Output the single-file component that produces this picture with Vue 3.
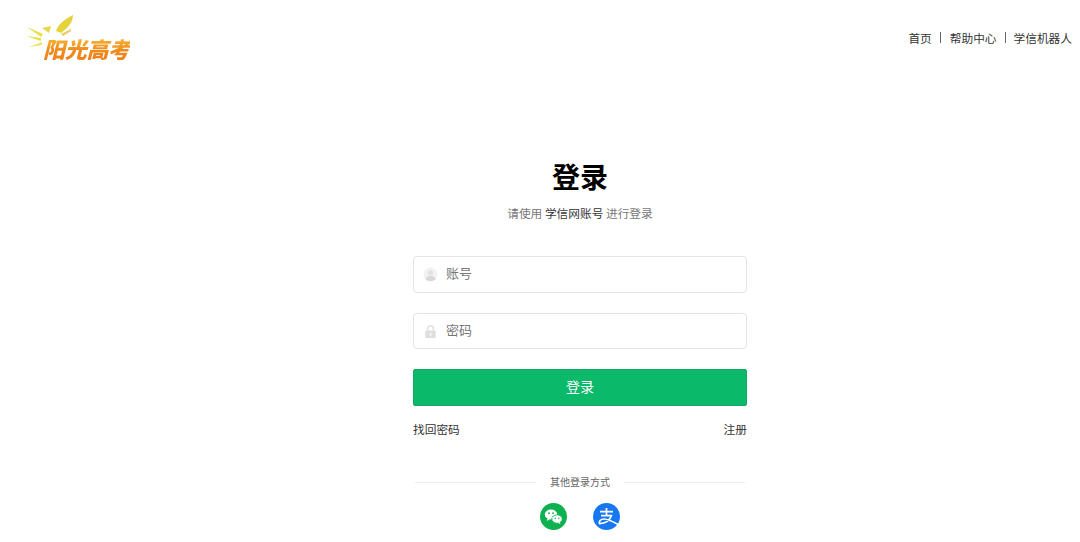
<template>
  <div class="page">
    <header class="top-bar">
      <div class="logo">
        <svg class="logo-rays" width="48" height="40" viewBox="0 0 48 40">
          <path d="M1 12 L17 19 L15 22 Z" fill="#e8e04a" />
          <path d="M0 21 L15 23 L15 26 Z" fill="#e8e04a" />
          <path d="M3 32 L16 27 L16 30 Z" fill="#ebe460" />
          <path d="M16 13 L25 11 L23 18 Z" fill="#e5d84a" />
          <path d="M30 16 C32 9 39 4 47 0 C47 7 42 13 35 18 Z" fill="#e6d33a" />
          <path d="M35 19 L45 14 L45 16 L37 21 Z" fill="#f0c868" />
        </svg>
        <span class="logo-text">阳光高考</span>
      </div>
      <nav class="top-nav">
        <a>首页</a>
        <i class="sep"></i>
        <a>帮助中心</a>
        <i class="sep sep-last"></i>
        <a>学信机器人</a>
      </nav>
    </header>

    <main class="login">
      <h1 class="title">登录</h1>
      <p class="sub">请使用 <b>学信网账号</b> 进行登录</p>

      <div class="field first">
        <svg class="field-icon" width="15" height="15" viewBox="0 0 16 16">
          <circle cx="8" cy="8" r="7.5" fill="#f3f3f3" />
          <circle cx="8" cy="6.2" r="2.8" fill="#e2e2e2" />
          <path d="M2.6 13 C3.6 10 6 9.6 8 9.6 C10 9.6 12.4 10 13.4 13 C11 15.6 5 15.6 2.6 13 Z" fill="#d8d8d8" />
        </svg>
        <span class="placeholder">账号</span>
      </div>
      <div class="field second">
        <svg class="field-icon" width="15" height="15" viewBox="0 0 16 16">
          <path d="M5 7 V5 a3 3 0 0 1 6 0 V7" fill="none" stroke="#e4e4e4" stroke-width="1.8" />
          <rect x="2.5" y="7" width="11" height="8" rx="1" fill="#dedede" />
          <rect x="7" y="9.5" width="2" height="3" fill="#f6f6f6" />
        </svg>
        <span class="placeholder">密码</span>
      </div>

      <button class="btn-login">登录</button>

      <div class="links">
        <a>找回密码</a>
        <a>注册</a>
      </div>

      <div class="divider">
        <span class="line"></span>
        <span class="divider-text">其他登录方式</span>
        <span class="line"></span>
      </div>

      <div class="socials">
        <svg width="27" height="27" viewBox="0 0 27 27">
          <circle cx="13.5" cy="13.5" r="13.5" fill="#0db14f" />
          <ellipse cx="11" cy="11.5" rx="6.2" ry="5" fill="#fff" />
          <path d="M7.5 15 L7 18 L10 16 Z" fill="#fff" />
          <ellipse cx="17" cy="16" rx="5.2" ry="4.2" fill="#fff" stroke="#0db14f" stroke-width="0.8" />
          <path d="M19.5 19 L20.5 21 L17.8 20 Z" fill="#fff" />
          <circle cx="9" cy="10.2" r="0.9" fill="#0db14f" />
          <circle cx="13" cy="10.2" r="0.9" fill="#0db14f" />
          <circle cx="15.3" cy="15.3" r="0.7" fill="#0db14f" />
          <circle cx="18.8" cy="15.3" r="0.7" fill="#0db14f" />
        </svg>
        <svg width="27" height="27" viewBox="0 0 27 27">
          <circle cx="13.5" cy="13.5" r="13.5" fill="#1677f0" />
          <path d="M7 8.6 H20 M13.5 5 V12 M8 12.6 H18.4 C17 17 13 20.5 6.5 20.6 C5.6 18.6 7.5 16 11 16 C15 16 20 18.6 26 22" fill="none" stroke="#fff" stroke-width="1.7" />
        </svg>
      </div>
    </main>
  </div>
</template>

<script setup>
</script>

<style>
html, body {
  margin: 0;
  background: #fff;
}
</style>

<style scoped>
.page {
  height: 542px;
  overflow: hidden;
  background: #fff;
  font-family: "Noto Sans CJK SC", "Liberation Sans", sans-serif;
  color: #333;
}

.top-bar {
  height: 76px;
  display: flex;
  justify-content: space-between;
  align-items: center;
  padding: 0 8px 0 26px;
}

.logo {
  position: relative;
  width: 106px;
  height: 46px;
  margin-top: -1px;
  filter: blur(0.4px);
}
.logo-rays {
  position: absolute;
  left: 0;
  top: 0;
}
.logo-text {
  position: absolute;
  left: 17px;
  top: 20px;
  font-family: "Noto Sans CJK SC", serif;
  font-size: 22px;
  line-height: 26px;
  font-weight: 900;
  font-style: italic;
  letter-spacing: -0.3px;
  white-space: nowrap;
  color: transparent;
  background: linear-gradient(#f9c03c, #f08a1c 60%, #ee7f18);
  -webkit-background-clip: text;
  background-clip: text;
}

.top-nav {
  display: flex;
  align-items: center;
  margin-top: -2px;
  font-size: 11.7px;
  color: #333;
}
.sep {
  width: 1px;
  height: 11px;
  background: #666;
  margin: 0 8.5px;
}
.sep-last {
  margin-right: 7.5px;
}

.login {
  width: 334px;
  margin-left: 413px;
  display: flex;
  flex-direction: column;
}

.title {
  margin: 80px 0 0;
  height: 40px;
  line-height: 40px;
  text-align: center;
  font-size: 28px;
  font-weight: 700;
  color: #000;
}
.sub {
  margin: 8px 0 0;
  line-height: 18px;
  text-align: center;
  font-size: 11.7px;
  color: #777;
}
.sub b {
  font-weight: 400;
  color: #333;
}

.field {
  display: flex;
  align-items: center;
  gap: 8px;
  box-sizing: border-box;
  padding: 0 0 4px 9px;
  border: 1px solid #e4e4e4;
  border-radius: 4px;
}
.first {
  height: 37px;
  margin-top: 34px;
}
.second {
  height: 36px;
  margin-top: 20px;
}
.field-icon {
  margin-top: 4px;
}
.placeholder {
  font-size: 13px;
  color: #777;
}

.btn-login {
  height: 37px;
  margin-top: 20px;
  padding: 0 0 4px;
  border: none;
  border-radius: 3px;
  background: #0bb96b;
  box-shadow: inset 0 0 0 1px #12a765;
  color: #fff;
  font-family: inherit;
  font-size: 14px;
}

.links {
  display: flex;
  justify-content: space-between;
  margin-top: 14px;
  line-height: 18px;
  font-size: 11.7px;
  color: #333;
}

.divider {
  display: flex;
  align-items: center;
  gap: 14px;
  margin-top: 35px;
  padding: 0 2px;
}
.line {
  flex: 1;
  height: 1px;
  background: #eee;
}
.divider-text {
  font-size: 10px;
  line-height: 18px;
  color: #666;
}

.socials {
  display: flex;
  justify-content: center;
  gap: 26px;
  margin-top: 12px;
}
</style>
